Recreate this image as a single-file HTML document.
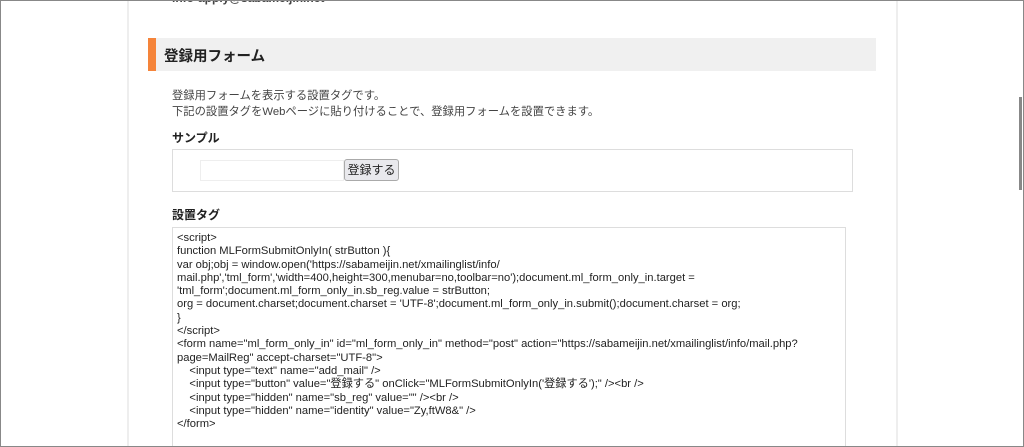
<!DOCTYPE html>
<html style="overflow:hidden;width:1024px;height:447px"><head><meta charset="utf-8"><style>
*{margin:0;padding:0;box-sizing:border-box}
body{width:1024px;height:447px;overflow:hidden;background:#fff;font-family:"Liberation Sans","Noto Sans CJK JP",sans-serif;color:#333;position:relative}
.frame{position:absolute;left:0;top:0;width:1024px;height:447px;border:1px solid #888;pointer-events:none}
.panel{position:absolute;left:127px;top:0;width:771px;height:447px;border-left:2px solid #eee;border-right:2px solid #eee;background:#fff}
.abs{position:absolute}
.hdr{left:148px;top:38px;width:728px;height:33px;background:#f0f0f0;border-left:8px solid #f5843a}
.hdr span{position:absolute;left:8px;top:7px;font-size:14.5px;font-weight:bold;color:#222}
.p{left:172px;font-size:11.3px;color:#444}
.h{left:172px;font-size:12px;font-weight:bold;color:#222}
.box{left:172px;top:149px;width:681px;height:43px;border:1px solid #ddd}
.inp{left:200px;top:160px;width:144px;height:21px;border:1px solid #eee;background:#fff}
.btn{left:344px;top:159px;width:55px;height:22px;border:1px solid #aaa;border-radius:3px;background:#e9e9ed;font-size:12px;text-align:center;line-height:20px;color:#222}
.ta{left:172px;top:227px;width:674px;height:230px;border:1px solid #ddd;padding:4px 4px;font-size:11.2px;line-height:13.3px;color:#222;white-space:pre}
.sb{left:1019px;top:97px;width:3px;height:93px;background:#888}
</style></head><body>
<div class="panel"></div>
<div class="abs p" style="top:-9px;left:172px;font-weight:bold;font-size:12px">info-apply@sabameijin.net</div>
<div class="abs hdr"><span>登録用フォーム</span></div>
<div class="abs p" style="top:87px">登録用フォームを表示する設置タグです。</div>
<div class="abs p" style="top:103px">下記の設置タグをWebページに貼り付けることで、登録用フォームを設置できます。</div>
<div class="abs h" style="top:129px">サンプル</div>
<div class="abs box"></div>
<div class="abs inp"></div>
<div class="abs btn">登録する</div>
<div class="abs h" style="top:206px">設置タグ</div>
<div class="abs ta">&lt;script&gt;
function MLFormSubmitOnlyIn( strButton ){
var obj;obj = window.open('https://sabameijin.net/xmailinglist/info/
mail.php','tml_form','width=400,height=300,menubar=no,toolbar=no');document.ml_form_only_in.target =
'tml_form';document.ml_form_only_in.sb_reg.value = strButton;
org = document.charset;document.charset = 'UTF-8';document.ml_form_only_in.submit();document.charset = org;
}
&lt;/script&gt;
&lt;form name="ml_form_only_in" id="ml_form_only_in" method="post" action="https://sabameijin.net/xmailinglist/info/mail.php?
page=MailReg" accept-charset="UTF-8"&gt;
    &lt;input type="text" name="add_mail" /&gt;
    &lt;input type="button" value="登録する" onClick="MLFormSubmitOnlyIn('登録する');" /&gt;&lt;br /&gt;
    &lt;input type="hidden" name="sb_reg" value="" /&gt;&lt;br /&gt;
    &lt;input type="hidden" name="identity" value="Zy,ftW8&amp;" /&gt;
&lt;/form&gt;</div>
<div class="abs sb"></div>
<div class="frame"></div>
</body></html>
